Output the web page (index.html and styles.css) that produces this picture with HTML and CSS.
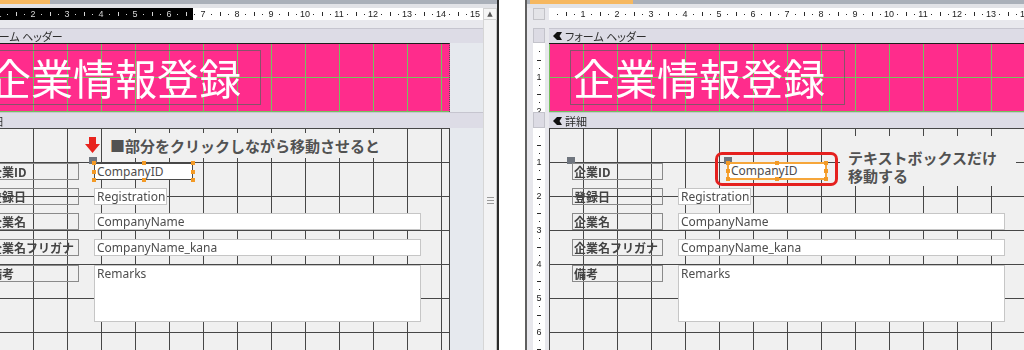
FILE: index.html
```html
<!DOCTYPE html>
<html lang="ja">
<head>
<meta charset="utf-8">
<title>フォーム デザイン</title>
<link rel="stylesheet" href="styles.css">
</head>
<body>
<div class="stage">
  <section class="panel pl">
    <div class="topstrip ts-l"><span class="tab tab-l"></span></div>
    <div class="hruler hr-l">
      <div class="rin rin-l">
        <span>1</span><span>2</span><span>3</span><span>4</span><span>5</span><span>6</span><span>7</span><span>8</span><span>9</span><span>10</span><span>11</span><span>12</span><span>13</span><span>14</span><span>15</span>
      </div>
      <div class="rsel"></div>
    </div>
    <div class="sb-btn">&#9650;</div>
    <div class="sb-track"><span class="grip"></span></div>
    <div class="view view-l">
      <div class="surface shift">
        <div class="secbar"><svg class="ico" viewBox="0 0 9 8" width="9" height="8"><path d="M0 4 L4 0 H9 L6.5 4 L9 8 H4 Z" fill="#111"/></svg><span class="bartext">フォーム ヘッダー</span></div>
        <div class="sect hdr">
          <div class="form pink"><div class="titlebox">企業情報登録</div></div>
        </div>
        <div class="secbar dbar"><svg class="ico" viewBox="0 0 9 8" width="9" height="8"><path d="M0 4 L4 0 H9 L6.5 4 L9 8 H4 Z" fill="#111"/></svg><span class="bartext">詳細</span></div>
        <div class="sect det">
          <div class="form grid">
            <div class="note note-l">■部分をクリックしながら移動させると</div>
            <svg class="arrow" viewBox="0 0 15 16" width="15" height="16"><path d="M4 0 H11 V7 H15 L7.5 16 L0 7 H4 Z" fill="#e8231d"/></svg>
            <div class="lbl r1">企業ID</div>
            <div class="lbl r2">登録日</div>
            <div class="lbl r3">企業名</div>
            <div class="lbl r4">企業名フリガナ</div>
            <div class="lbl r5">備考</div>
            <span class="mh mh-l"></span>
            <div class="tb sel-l r1 w-id">CompanyID
              <span class="h tl"></span><span class="h tm"></span><span class="h tr"></span><span class="h ml"></span><span class="h mr"></span><span class="h bl"></span><span class="h bm"></span><span class="h br"></span>
            </div>
            <div class="tb r2 w-reg">RegistrationDate</div>
            <div class="tb r3 w-full">CompanyName</div>
            <div class="tb r4 w-full">CompanyName_kana</div>
            <div class="tb r5 w-full tall">Remarks</div>
          </div>
        </div>
      </div>
    </div>
    <div class="edge"></div>
  </section>

  <div class="gapcol"></div>

  <section class="panel pr">
    <div class="frame"></div>
    <div class="topstrip ts-r"><span class="tab tab-r"></span></div>
    <div class="corner"></div>
    <div class="hruler hr-r">
      <div class="rin">
        <span>1</span><span>2</span><span>3</span><span>4</span><span>5</span><span>6</span><span>7</span><span>8</span><span>9</span><span>10</span><span>11</span><span>12</span><span>13</span><span>14</span>
      </div>
    </div>
    <div class="vcol">
      <div class="vbox vb1"></div>
      <div class="vruler vr-h"><span>1</span><span>2</span></div>
      <div class="vbox vb2"></div>
      <div class="vruler vr-d"><span>1</span><span>2</span><span>3</span><span>4</span><span>5</span><span>6</span></div>
    </div>
    <div class="view view-r">
      <div class="surface">
        <div class="secbar"><svg class="ico" viewBox="0 0 9 8" width="9" height="8"><path d="M0 4 L4 0 H9 L6.5 4 L9 8 H4 Z" fill="#111"/></svg><span class="bartext">フォーム ヘッダー</span></div>
        <div class="sect hdr">
          <div class="form pink"><div class="titlebox">企業情報登録</div></div>
        </div>
        <div class="secbar dbar"><svg class="ico" viewBox="0 0 9 8" width="9" height="8"><path d="M0 4 L4 0 H9 L6.5 4 L9 8 H4 Z" fill="#111"/></svg><span class="bartext">詳細</span></div>
        <div class="sect det">
          <div class="form grid">
            <div class="note note-r">テキストボックスだけ<br>移動する</div>
            <span class="mh mh-lbl"></span>
            <div class="lbl r1">企業ID</div>
            <div class="lbl r2">登録日</div>
            <div class="lbl r3">企業名</div>
            <div class="lbl r4">企業名フリガナ</div>
            <div class="lbl r5">備考</div>
            <div class="redbox"></div>
            <span class="mh mh-r"></span>
            <div class="tb moved">CompanyID
              <span class="h tl"></span><span class="h tm"></span><span class="h tr"></span><span class="h ml"></span><span class="h mr"></span><span class="h bl"></span><span class="h bm"></span><span class="h br"></span>
            </div>
            <div class="tb r2 w-reg">RegistrationDate</div>
            <div class="tb r3 w-full">CompanyName</div>
            <div class="tb r4 w-full">CompanyName_kana</div>
            <div class="tb r5 w-full tall">Remarks</div>
          </div>
        </div>
      </div>
    </div>
  </section>
</div>
</body>
</html>
```

FILE: styles.css
```css
* { box-sizing: border-box; }
html, body { margin: 0; padding: 0; }
body {
  width: 1024px;
  height: 350px;
  overflow: hidden;
  background: #ffffff;
  font-family: "Noto Sans CJK JP", "Noto Sans", sans-serif;
}
.stage { display: flex; width: 1024px; height: 350px; }

.panel {
  display: grid;
  height: 350px;
  background: #e8e8ed;
  overflow: hidden;
  grid-template-rows: 8px 12px 8px 1fr;
}
.pl { width: 499px; grid-template-columns: 483px 14px 2px; }
.gapcol { width: 26px; flex: none; background: #fff; }
.pr { width: 499px; grid-template-columns: 2px 6px 12px 4px 1fr; }

/* top strip */
.topstrip {
  display: flex;
  background: linear-gradient(#aab0b9 0 4px, #e2e3e7 4px);
}
.ts-l { grid-row: 1; grid-column: 1 / 3; }
.ts-r { grid-row: 1; grid-column: 2 / 6; }
.tab { height: 4px; background: #f6b860; }
.tab-l { width: 50px; }
.tab-r { width: 103px; margin-left: 3px; }

/* horizontal ruler */
.hruler {
  grid-row: 2;
  position: relative;
  overflow: hidden;
  background: #fff;
}
.hr-l { grid-column: 1; }
.hr-r { grid-column: 5; }
.rin {
  display: flex;
  height: 100%;
  width: 1100px;
  padding-left: 17px;
  background:
    linear-gradient(90deg, transparent 17px, #2a2a2a 17px 18px, transparent 18px) 0 50% / 34px 4px repeat-x,
    linear-gradient(90deg, transparent 8px, #2a2a2a 8px 9px, transparent 9px 25px, #2a2a2a 25px 26px, transparent 26px) 0 50% / 34px 1px repeat-x;
}
.rin-l { margin-left: -35px; }
.rin span, .vruler span {
  flex: none;
  width: 34px;
  text-align: center;
  font: 9px/12px "Liberation Sans", Arial, sans-serif;
  color: #222;
}
.rsel {
  position: absolute;
  left: 0; top: 0; bottom: 0;
  width: 193px;
  background: #fff;
  mix-blend-mode: difference;
}

/* scrollbar of left panel */
.sb-btn {
  grid-row: 2;
  grid-column: 2;
  background: #f6f6f6;
  border: 1px solid #d2d2d2;
  color: #555;
  font: 7px/10px "DejaVu Sans", sans-serif;
  text-align: center;
}
.sb-track {
  grid-row: 3 / 5;
  grid-column: 2;
  background: #f3f3f4;
  border-left: 1px solid #d6d6d6;
  border-right: 1px solid #c4c4c4;
  display: flex;
  justify-content: center;
  padding-top: 177px;
}
.grip {
  width: 7px;
  height: 7px;
  background: repeating-linear-gradient(180deg, #9a9a9a 0 1px, transparent 1px 3px);
}
.edge { grid-row: 1 / 5; grid-column: 3; background: #2b2b2b; }

/* right panel frame */
.frame { grid-row: 1 / 5; grid-column: 1; background: #5f5f5f; }
.corner {
  grid-row: 2;
  grid-column: 3;
  background: #e4e4e8;
  border: 1px solid #c3c3c8;
}
.vcol {
  grid-row: 4;
  grid-column: 3;
  display: flex;
  flex-direction: column;
}
.vbox { background: #dcdbe4; border: 1px solid #c3c3cb; }
.vb1 { height: 15px; }
.vb2 { height: 16px; }
.vruler {
  display: flex;
  flex-direction: column;
  align-items: center;
  padding-top: 17px;
  overflow: hidden;
  background:
    linear-gradient(180deg, transparent 17px, #2a2a2a 17px 18px, transparent 18px) 50% 0 / 4px 34px repeat-y,
    linear-gradient(180deg, transparent 8px, #2a2a2a 8px 9px, transparent 9px 25px, #2a2a2a 25px 26px, transparent 26px) 50% 0 / 1px 34px repeat-y,
    #fff;
}
.vruler span { height: 34px; line-height: 34px; width: 12px; }
.vr-h { height: 69px; }
.vr-d { flex: 1; }

/* design surface */
.view { grid-row: 4; overflow: hidden; }
.view-l { grid-column: 1; }
.view-r { grid-column: 5; }
.surface {
  width: 560px;
  height: 100%;
  display: flex;
  flex-direction: column;
}
.shift { margin-left: -35px; }

.secbar {
  height: 15px;
  flex: none;
  display: flex;
  align-items: center;
  background: #dddce6;
  border-top: 1px solid #c6c5cf;
  padding-left: 4px;
  color: #2e2e2e;
  font-size: 11px;
  font-feature-settings: "palt";
}
.dbar { height: 16px; }
.ico { flex: none; margin-right: 3px; }
.bartext { line-height: 14px; }

.sect { display: flex; background: #e6e9ee; flex: none; }
.hdr { height: 69px; }
.det { flex: 1; }
.form { width: 485px; flex: none; position: relative; }

.pink {
  background-color: #ff2c8c;
  border-top: 1px solid #1c1c1c;
  border-right: 1px dotted #555;
  background-origin: border-box;
  background-image:
    linear-gradient(90deg, #76c15e 0 1px, transparent 1px),
    linear-gradient(180deg, #76c15e 0 1px, transparent 1px);
  background-size: 34px 100%, 100% 34px;
}
.titlebox {
  position: absolute;
  left: 21px;
  top: 6px;
  width: 275px;
  height: 55px;
  border: 1px solid rgba(95, 95, 95, 0.75);
  color: #fff;
  font-size: 42px;
  line-height: 52px;
  padding-left: 2px;
  white-space: nowrap;
}

.grid {
  background-color: #f0f0f0;
  border-right: 1px solid #444;
  background-image:
    linear-gradient(90deg, #474747 0 1px, transparent 1px),
    linear-gradient(180deg, #474747 0 1px, transparent 1px);
  background-size: 34px 100%, 100% 34px;
}

/* controls */
.lbl {
  position: absolute;
  left: 23px;
  width: 91px;
  height: 17px;
  border: 1px solid #8a8a8a;
  padding-left: 1px;
  color: #434343;
  font-size: 12px;
  font-weight: 700;
  line-height: 15px;
  white-space: nowrap;
}
.tb {
  position: absolute;
  left: 129px;
  height: 17px;
  background: #fff;
  border: 1px solid #c6c6c6;
  padding-left: 2px;
  color: #4d4d4d;
  font-family: "Noto Sans", sans-serif;
  font-size: 12px;
  line-height: 15px;
  white-space: nowrap;
  overflow: hidden;
}
.r1 { top: 35px; }
.r2 { top: 60px; }
.r3 { top: 85px; }
.r4 { top: 111px; }
.r5 { top: 137px; }
.w-id { width: 99px; }
.w-reg { width: 73px; }
.w-full { width: 327px; }
.tall { height: 57px; }

.sel-l { border-color: #4a4a4a; overflow: visible; }
.moved {
  left: 178px;
  top: 34px;
  width: 100px;
  height: 18px;
  border: 2px solid #f6a63a;
  padding-left: 2px;
  line-height: 14px;
  overflow: visible;
}
.h {
  position: absolute;
  width: 4px;
  height: 4px;
  background: #f39a26;
}
.tl { left: -3px; top: -3px; }
.tm { left: calc(50% - 2px); top: -3px; }
.tr { right: -3px; top: -3px; }
.ml { left: -3px; top: calc(50% - 2px); }
.mr { right: -3px; top: calc(50% - 2px); }
.bl { left: -3px; bottom: -3px; }
.bm { left: calc(50% - 2px); bottom: -3px; }
.br { right: -3px; bottom: -3px; }

.mh {
  position: absolute;
  width: 8px;
  height: 7px;
  background: #6f757e;
  top: 29px;
}
.mh-l { left: 124px; }
.mh-lbl { left: 18px; }
.mh-r { left: 175px; }

.note {
  position: absolute;
  background: #f0f0f0;
  color: #525252;
  font-weight: 700;
  font-size: 15px;
  white-space: nowrap;
}
.note-l {
  left: 139px;
  top: 5px;
  width: 282px;
  height: 25px;
  padding-left: 6px;
  line-height: 25px;
}
.note-r {
  left: 291px;
  top: 8px;
  width: 176px;
  height: 50px;
  padding: 13px 0 0 8px;
  line-height: 18px;
}
.arrow { position: absolute; left: 120px; top: 9px; }
.redbox {
  position: absolute;
  left: 166px;
  top: 24px;
  width: 123px;
  height: 34px;
  border: 3px solid #e5201e;
  border-radius: 7px;
}
```
